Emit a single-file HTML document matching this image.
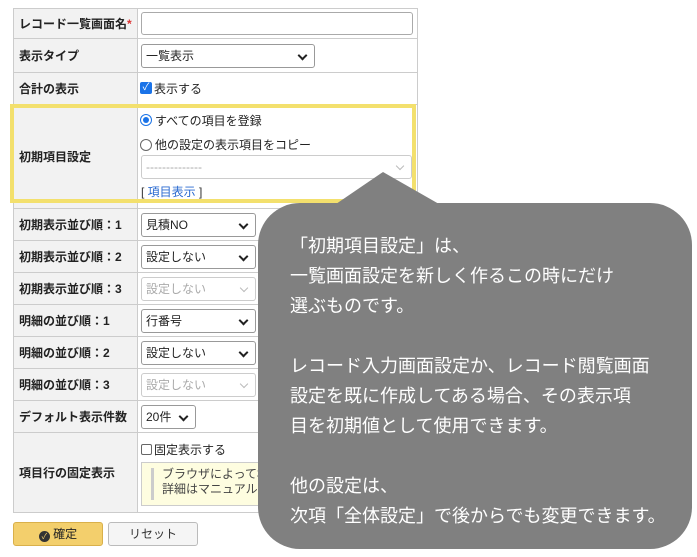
<!DOCTYPE html>
<html><head><meta charset="utf-8"><style>
*{box-sizing:border-box;margin:0;padding:0}
body{width:697px;height:557px;background:#fff;position:relative;overflow:hidden;font-family:"Liberation Sans","Noto Sans CJK JP",sans-serif;font-size:12px;color:#333}
.a{position:absolute}
.lab{position:absolute;left:13px;width:124px;background:#f2f2f2;border:1px solid #ccc;border-right:none;font-weight:bold;display:flex;align-items:center;padding-left:5px;font-size:12px;color:#222}
.val{position:absolute;left:137px;width:281px;border:1px solid #ccc;background:#fff}
.sel{position:absolute;border:1px solid #999;border-radius:3px;background:#fff;height:24px;padding-left:4px;line-height:22px;font-size:12px;color:#222}
.sel:after{content:"";position:absolute;right:8px;top:7px;width:5px;height:5px;border-right:2px solid #222;border-bottom:2px solid #222;transform:rotate(45deg)}
.dis{border-color:#ccc;color:#aaa}
.dis:after{border-color:#bbb;border-width:1px}
</style></head><body>
<div class="lab" style="top:8px;height:31px">レコード一覧画面名<span style="color:#d33">*</span></div>
<div class="val" style="top:8px;height:31px"></div>
<div class="a" style="left:141px;top:12px;width:272px;height:23px;border:1px solid #aaa;border-radius:3px"></div>
<div class="lab" style="top:38px;height:35px">表示タイプ</div>
<div class="val" style="top:38px;height:35px"></div>
<div class="sel" style="left:141px;top:44px;width:174px">一覧表示</div>
<div class="lab" style="top:72px;height:33px">合計の表示</div>
<div class="val" style="top:72px;height:33px"></div>
<div class="a" style="left:140px;top:82px;width:12px;height:12px;background:#1a73e8;border-radius:2px;color:#fff;font-size:10px;line-height:12px;text-align:center">✓</div>
<div class="a" style="left:154px;top:80px;color:#222">表示する</div>
<div class="lab" style="top:104px;height:105px">初期項目設定</div>
<div class="val" style="top:104px;height:105px"></div>
<div class="a" style="left:140px;top:114px;width:12px;height:12px;border:1px solid #1a73e8;border-radius:50%"><div style="margin:2px;width:6px;height:6px;border-radius:50%;background:#1a73e8"></div></div>
<div class="a" style="left:155px;top:112px;color:#222">すべての項目を登録</div>
<div class="a" style="left:140px;top:139px;width:12px;height:12px;border:1px solid #666;border-radius:50%"></div>
<div class="a" style="left:155px;top:136px;color:#222">他の設定の表示項目をコピー</div>
<div class="sel dis" style="left:141px;top:155px;width:271px">--------------</div>
<div class="a" style="left:141px;top:183px;color:#333">[ <span style="color:#2a6ad0">項目表示</span> ]</div>
<div class="lab" style="top:208px;height:33px">初期表示並び順：1</div><div class="val" style="top:208px;height:33px"></div>
<div class="sel" style="left:141px;top:213px;width:115px">見積NO</div>
<div class="lab" style="top:240px;height:33px">初期表示並び順：2</div><div class="val" style="top:240px;height:33px"></div>
<div class="sel" style="left:141px;top:245px;width:115px">設定しない</div>
<div class="lab" style="top:272px;height:33px">初期表示並び順：3</div><div class="val" style="top:272px;height:33px"></div>
<div class="sel dis" style="left:141px;top:277px;width:115px">設定しない</div>
<div class="lab" style="top:304px;height:33px">明細の並び順：1</div><div class="val" style="top:304px;height:33px"></div>
<div class="sel" style="left:141px;top:309px;width:115px">行番号</div>
<div class="lab" style="top:336px;height:33px">明細の並び順：2</div><div class="val" style="top:336px;height:33px"></div>
<div class="sel" style="left:141px;top:341px;width:115px">設定しない</div>
<div class="lab" style="top:368px;height:33px">明細の並び順：3</div><div class="val" style="top:368px;height:33px"></div>
<div class="sel dis" style="left:141px;top:373px;width:115px">設定しない</div>
<div class="lab" style="top:400px;height:33px">デフォルト表示件数</div><div class="val" style="top:400px;height:33px"></div>
<div class="sel" style="left:141px;top:405px;width:55px">20件</div>
<div class="lab" style="top:432px;height:81px">項目行の固定表示</div><div class="val" style="top:432px;height:81px"></div>
<div class="a" style="left:141px;top:444px;width:11px;height:11px;border:1px solid #666;border-radius:2px"></div>
<div class="a" style="left:154px;top:441px;color:#222">固定表示する</div>
<div class="a" style="left:141px;top:462px;width:272px;height:44px;background:#fefde0;border:1px solid #ccc"></div>
<div class="a" style="left:151px;top:468px;width:3px;height:32px;background:#ccc"></div>
<div class="a" style="left:162px;top:467px;line-height:15px;color:#444">ブラウザによって機能しない場合があります。<br>詳細はマニュアルをご覧ください。</div>
<div class="a" style="left:13px;top:522px;width:90px;height:24px;background:#f3cf6c;border:1px solid #d9b04a;border-radius:3px;text-align:center;line-height:22px;color:#222"><span style="display:inline-block;width:11px;height:11px;border-radius:50%;background:#333;color:#f3cf6c;font-size:8px;line-height:11px;vertical-align:-1px">✓</span> 確定</div>
<div class="a" style="left:108px;top:522px;width:90px;height:24px;background:#f5f5f5;border:1px solid #bbb;border-radius:3px;text-align:center;line-height:22px;color:#333">リセット</div>
<div class="a" style="left:10px;top:104px;width:406px;height:99px;border:4px solid #f3e06d"></div>
<svg class="a" style="left:0;top:0" width="697" height="557"><polygon points="336,204 383,172 439,204" fill="#808080"/></svg>
<div class="a" style="left:258px;top:203px;width:434px;height:346px;background:#808080;border-radius:42px"></div>
<div class="a" style="left:290px;top:231px;color:#fff;font-size:18px;line-height:30px;white-space:nowrap">「初期項目設定」は、<br>一覧画面設定を新しく作るこの時にだけ<br>選ぶものです。<br><br>レコード入力画面設定か、レコード閲覧画面<br>設定を既に作成してある場合、その表示項<br>目を初期値として使用できます。<br><br>他の設定は、<br>次項「全体設定」で後からでも変更できます。</div>
</body></html>
